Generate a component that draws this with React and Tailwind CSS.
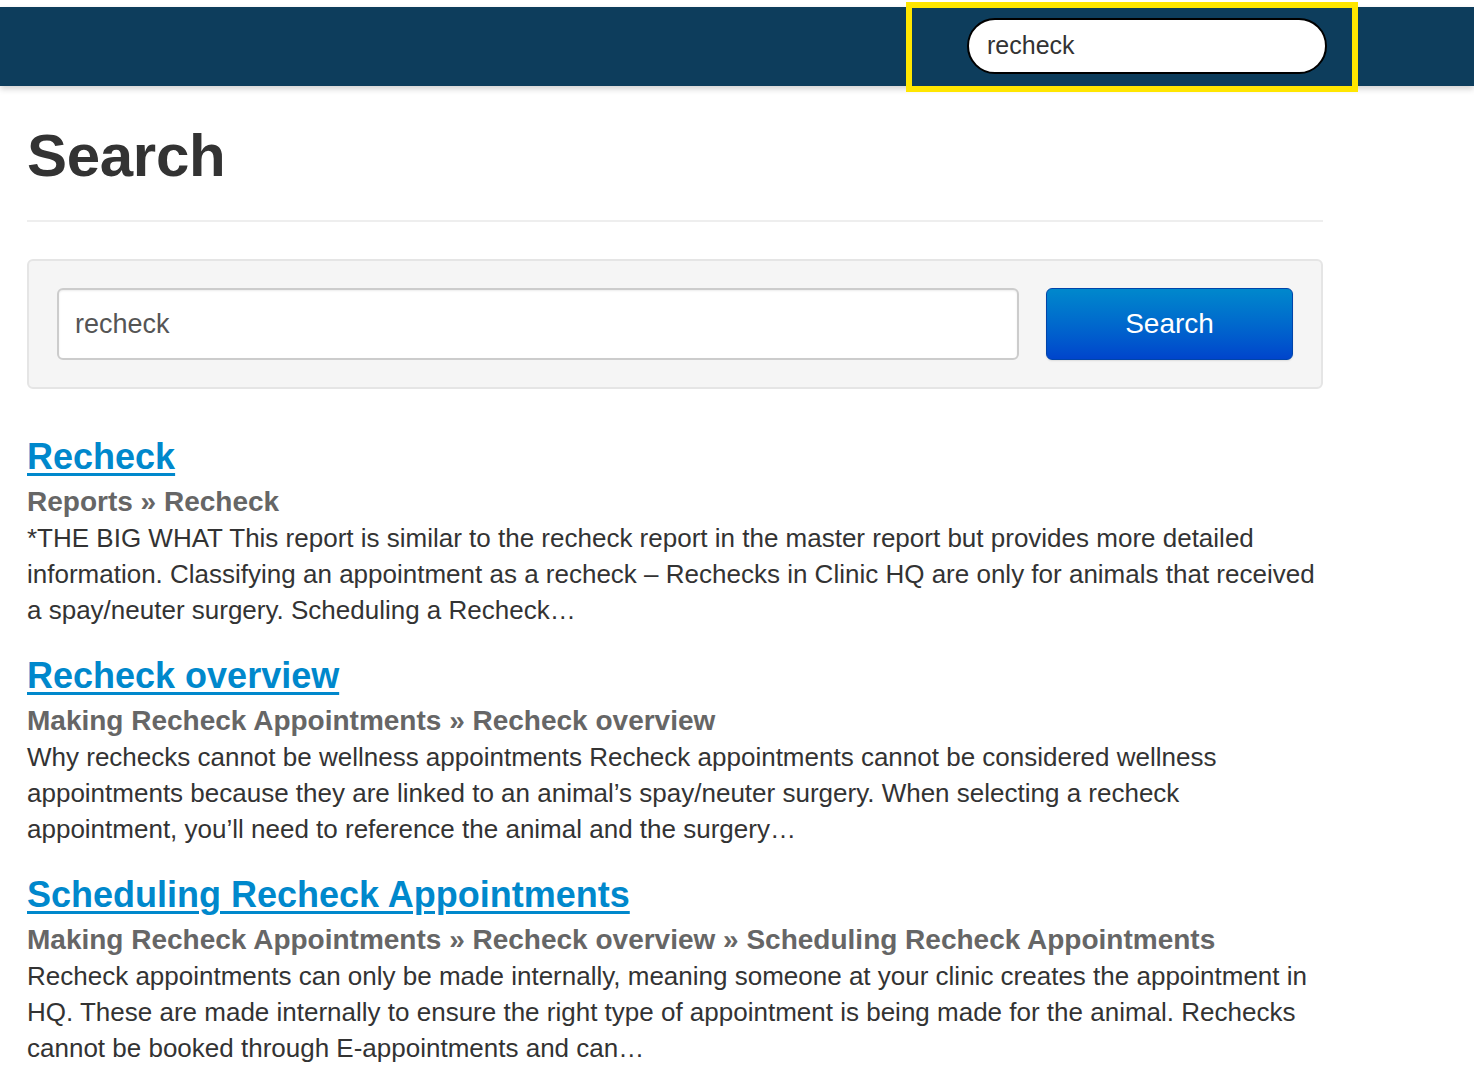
import React, { useState } from 'react';

const results = [
  {
    title: 'Recheck',
    crumbs: ['Reports', 'Recheck'],
    body: '*THE BIG WHAT This report is similar to the recheck report in the master report but provides more detailed information. Classifying an appointment as a recheck – Rechecks in Clinic HQ are only for animals that received a spay/neuter surgery. Scheduling a Recheck…',
  },
  {
    title: 'Recheck overview',
    crumbs: ['Making Recheck Appointments', 'Recheck overview'],
    body: 'Why rechecks cannot be wellness appointments Recheck appointments cannot be considered wellness appointments because they are linked to an animal’s spay/neuter surgery. When selecting a recheck appointment, you’ll need to reference the animal and the surgery…',
  },
  {
    title: 'Scheduling Recheck Appointments',
    crumbs: ['Making Recheck Appointments', 'Recheck overview', 'Scheduling Recheck Appointments'],
    body: 'Recheck appointments can only be made internally, meaning someone at your clinic creates the appointment in HQ. These are made internally to ensure the right type of appointment is being made for the animal. Rechecks cannot be booked through E-appointments and can…',
  },
];

function App() {
  const [query, setQuery] = useState('recheck');
  const [topQuery, setTopQuery] = useState('recheck');

  return (
    <div className="min-h-screen bg-white pt-[7px] font-['Liberation_Sans',Arial,sans-serif] text-[#333]">
      {/* top nav bar */}
      <div className="relative h-[79px] bg-[#0d3d5c] shadow-[0_3px_6px_rgba(0,0,0,0.18)]">
        <div className="absolute left-[906px] top-[-5px] h-[90px] w-[452px] border-[6px] border-[#ffe600]" />
        <div className="absolute left-[967px] top-[11px] flex h-[56px] w-[360px] items-center rounded-full border-2 border-black bg-white px-[18px]">
          <input
            className="w-full bg-transparent text-[25px] text-[#333] outline-none"
            value={topQuery}
            onChange={(e) => setTopQuery(e.target.value)}
          />
        </div>
      </div>

      <div className="w-[1296px] pl-[27px] box-content">
        <h1 className="mt-[30px] text-[60px] font-bold leading-[80px] tracking-[-0.3px] text-[#333]">Search</h1>
        <div className="mt-[24px] h-[2px] bg-[#eeeeee]" />

        {/* search well */}
        <div className="mt-[37px] flex items-center gap-[27px] rounded-[6px] border-2 border-[#e5e5e5] bg-[#f5f5f5] px-[28px] py-[27px]">
          <input
            className="h-[72px] flex-1 rounded-[6px] border-2 border-[#cccccc] bg-white px-[16px] text-[27px] text-[#555] shadow-[inset_0_1px_2px_rgba(0,0,0,0.08)] outline-none"
            value={query}
            onChange={(e) => setQuery(e.target.value)}
          />
          <button className="h-[72px] w-[247px] rounded-[6px] border border-[#0044aa] bg-gradient-to-b from-[#0088cc] to-[#0044cc] text-[28px] text-white shadow-[0_1px_2px_rgba(0,0,0,0.1)]">
            Search
          </button>
        </div>

        {/* results */}
        <div className="mt-[44px] flex flex-col gap-[24px]">
          {results.map((r) => (
            <div key={r.title}>
              <a href="#" className="block text-[36px] font-bold leading-[48px] text-[#0088cc] underline decoration-[3px] underline-offset-[4px]">
                {r.title}
              </a>
              <div className="mt-[1px] text-[28px] font-bold leading-[40px] text-[#666]">
                {r.crumbs.join(' » ')}
              </div>
              <p className="mt-[-2px] text-[26px] leading-[36px] text-[#333]">{r.body}</p>
            </div>
          ))}
        </div>
      </div>
    </div>
  );
}

export default App;
